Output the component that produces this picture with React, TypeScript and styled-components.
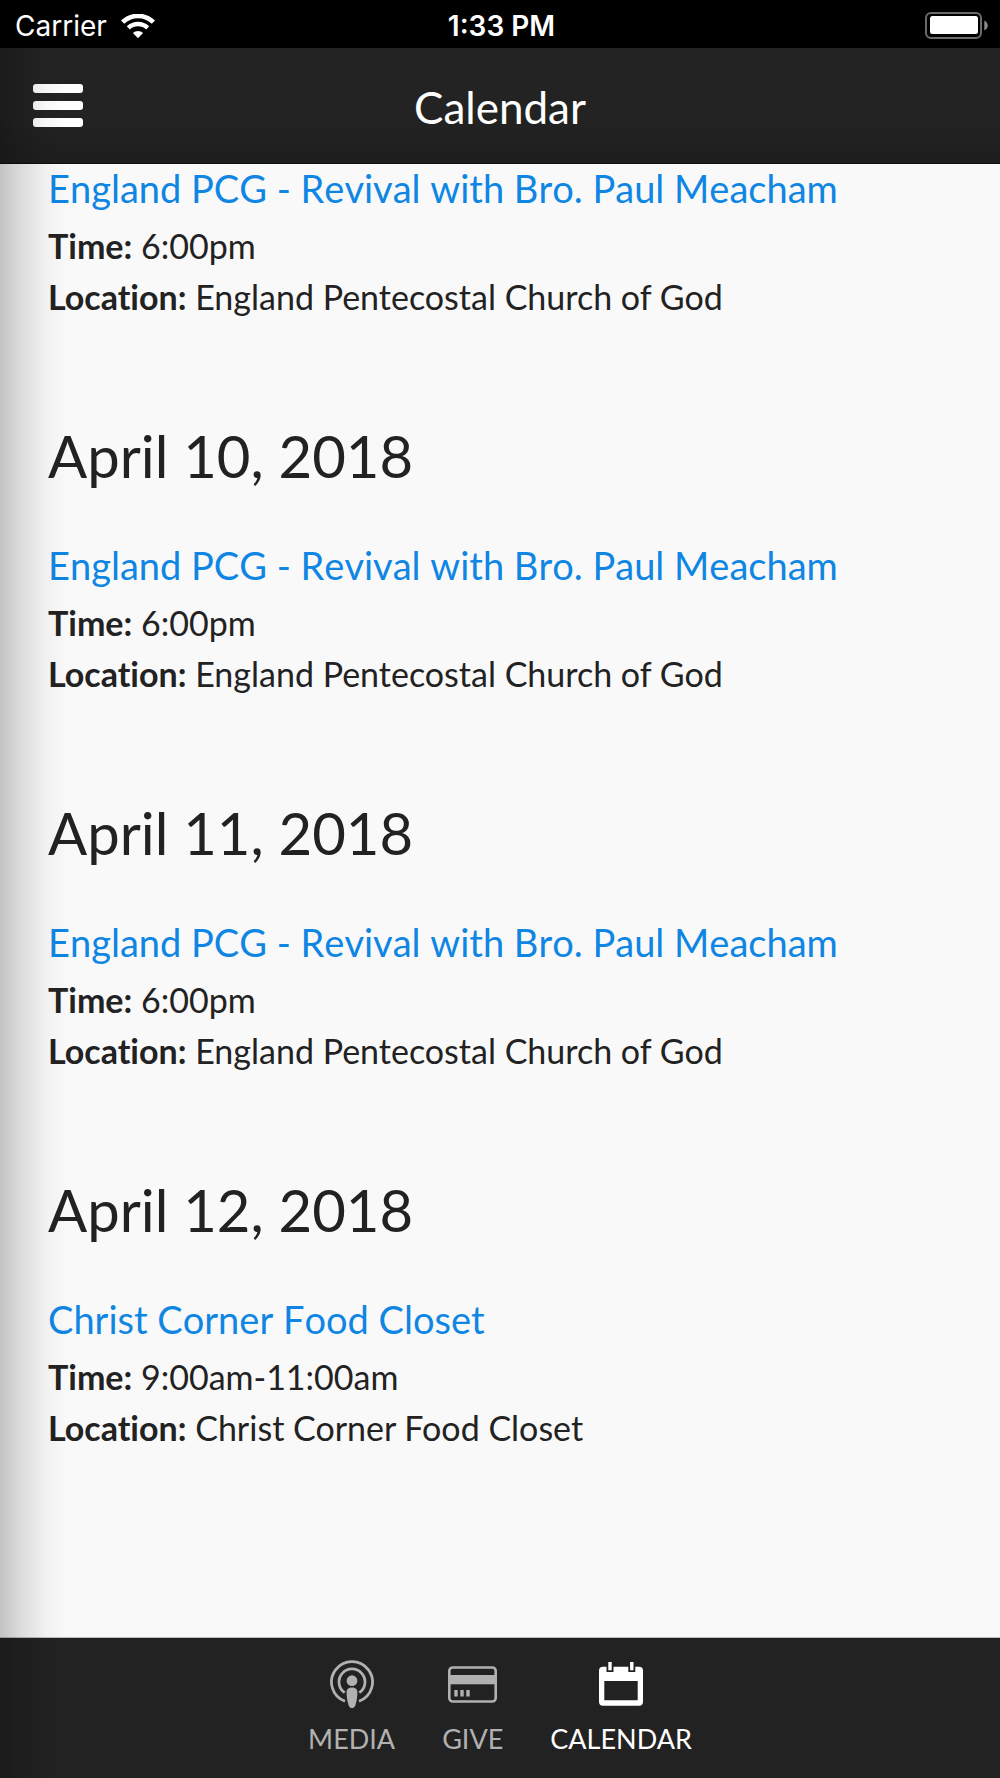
import React from "react";
import styled, { createGlobalStyle } from "styled-components";

const GlobalStyle = createGlobalStyle`
  *, *::before, *::after { box-sizing: border-box; }
  body {
    margin: 0;
    background: #f9f9f9;
    color: #222;
    font-family: Lato, "Open Sans", sans-serif;
    font-variant-ligatures: none;
  }
`;

const Screen = styled.div`
  min-height: 100vh;
  display: flex;
  flex-direction: column;
`;

const StatusBar = styled.div`
  height: 48px;
  padding: 3px 12px 0 15px;
  display: grid;
  grid-template-columns: 1fr auto 1fr;
  align-items: center;
  background: #000;
  color: #fff;
  font: 400 28px/44px Inter, sans-serif;
`;

const Carrier = styled.div`
  display: flex;
  align-items: center;
  gap: 14px;
`;

const Clock = styled.time`
  font-weight: 600;
`;

const Battery = styled.svg`
  justify-self: end;
`;

const Page = styled.div`
  position: relative;
  flex: 1;
  display: flex;
  flex-direction: column;

  &::before {
    content: "";
    position: absolute;
    z-index: 1;
    top: 0;
    bottom: 0;
    left: 0;
    width: 68px;
    pointer-events: none;
    background: linear-gradient(
      to right,
      rgba(0, 0, 0, 0.22),
      rgba(0, 0, 0, 0.12) 30%,
      rgba(0, 0, 0, 0.03) 68%,
      rgba(0, 0, 0, 0)
    );
  }
`;

const Header = styled.header`
  height: 116px;
  padding: 0 33px;
  display: grid;
  grid-template-columns: 1fr auto 1fr;
  align-items: center;
  background: linear-gradient(#232323 60%, #1e1e1e);
  border-bottom: 1px solid #0c0c0c;
  color: #fff;
`;

const MenuButton = styled.button`
  justify-self: start;
  padding: 0;
  border: 0;
  background: none;
  display: grid;
  gap: 8px;
`;

const MenuBar = styled.span`
  width: 50px;
  height: 9px;
  border-radius: 3px;
  background: #fff;
`;

const Title = styled.h1`
  margin: 0;
  padding-top: 2px;
  font-size: 44px;
  line-height: 56px;
  font-weight: 400;
`;

const Events = styled.main`
  flex: 1;
  padding: 0 48px 98px;
`;

const Day = styled.section`
  & + & {
    padding-top: 98px;
  }
`;

const DayHeading = styled.h2`
  margin: 0 0 49px;
  font-size: 58px;
  line-height: 72px;
  font-weight: 400;
`;

const EventTitle = styled.h3`
  margin: 0 0 8px;
  font-size: 38px;
  line-height: 48px;
  font-weight: 400;
  font-kerning: none;
`;

const EventLink = styled.a`
  color: #0f86e3;
  text-decoration: none;
`;

const Detail = styled.p`
  margin: 0;
  font-size: 34px;
  line-height: 51px;
`;

const TabBar = styled.nav`
  height: 140px;
  padding-top: 22px;
  display: flex;
  justify-content: center;
  gap: 47px;
  background: #222;
  box-shadow: 0 -1px 0 #bdbdbd;
`;

const Tab = styled.a<{ $active?: boolean }>`
  display: flex;
  flex-direction: column;
  align-items: center;
  gap: 15px;
  color: ${(p) => (p.$active ? "#fff" : "#b1b1b1")};
  font-size: 27px;
  line-height: 32px;
  text-decoration: none;
`;

const days = [
  { date: "", title: "England PCG - Revival with Bro. Paul Meacham", time: "6:00pm", place: "England Pentecostal Church of God" },
  { date: "April 10, 2018", title: "England PCG - Revival with Bro. Paul Meacham", time: "6:00pm", place: "England Pentecostal Church of God" },
  { date: "April 11, 2018", title: "England PCG - Revival with Bro. Paul Meacham", time: "6:00pm", place: "England Pentecostal Church of God" },
  { date: "April 12, 2018", title: "Christ Corner Food Closet", time: "9:00am-11:00am", place: "Christ Corner Food Closet" },
];

const WifiIcon = () => (
  <svg width="34" height="24" viewBox="0 0 34 24" fill="none" stroke="#fff" aria-hidden="true">
    <path d="M1.6 8.2a22 22 0 0 1 30.8 0" strokeWidth="4.6" />
    <path d="M7.3 13.9a14 14 0 0 1 19.4 0" strokeWidth="4.4" />
    <path d="M11.9 19.1a7.3 7.3 0 0 1 10.2 0L17 24.2z" fill="#fff" stroke="none" />
  </svg>
);

const BatteryIcon = () => (
  <Battery width="63" height="27" viewBox="0 0 63 27" aria-hidden="true">
    <rect x="1" y="1" width="55" height="25" rx="5" fill="none" stroke="#6b6b6b" strokeWidth="2" />
    <rect x="5" y="4" width="48" height="18" rx="2.5" fill="#fff" />
    <path d="M59.3 8.5c4.6 2 4.6 8 0 10z" fill="#8c8c8c" />
  </Battery>
);

const PodcastIcon = () => (
  <svg width="44" height="48" viewBox="0 0 44 48" fill="none" stroke="currentColor" aria-hidden="true">
    <path d="M15 41.3a20.5 20.5 0 1 1 14 0" strokeWidth="2.8" />
    <path d="M14.7 32.7a13 13 0 1 1 14.6 0" strokeWidth="2.8" />
    <circle cx="22" cy="20.7" r="5.4" fill="currentColor" stroke="none" />
    <path
      d="M16.6 32.5c0-3.4 2-4.9 5.4-4.9s5.4 1.5 5.4 4.9c0 4.5-.8 9-1.8 12.3-.6 2-1.9 3.4-3.6 3.4s-3-1.4-3.6-3.4c-1-3.3-1.8-7.8-1.8-12.3z"
      fill="currentColor"
      stroke="none"
    />
  </svg>
);

const CardIcon = () => (
  <svg width="49" height="48" viewBox="0 0 49 48" fill="currentColor" aria-hidden="true">
    <rect x="1.3" y="7.5" width="46.4" height="34" rx="3.5" fill="none" stroke="currentColor" strokeWidth="2.6" />
    <rect x="1" y="15" width="47" height="9.3" />
    <path d="M6.3 30h3.4v6.5H6.3zM12.3 30h3.4v6.5h-3.4zM18.3 30h3.4v6.5h-3.4z" />
  </svg>
);

const CalendarIcon = () => (
  <svg width="44" height="48" viewBox="0 0 44 48" fill="currentColor" aria-hidden="true">
    <path
      fillRule="evenodd"
      d="M4 6.7h3.5V12h7V6.7h14.8V12h7V6.7H40a4 4 0 0 1 4 4v31a4 4 0 0 1-4 4H4a4 4 0 0 1-4-4v-31a4 4 0 0 1 4-4zM5.3 21v19.2h33.4V21z"
    />
    <path d="M9.3 2h3.4v8.3H9.3zM31.1 2h3.4v8.3h-3.4z" />
  </svg>
);

export default function App() {
  return (
    <Screen>
      <GlobalStyle />
      <StatusBar>
        <Carrier>
          Carrier
          <WifiIcon />
        </Carrier>
        <Clock>1:33 PM</Clock>
        <BatteryIcon />
      </StatusBar>
      <Page>
        <Header>
          <MenuButton type="button" aria-label="Menu">
            <MenuBar />
            <MenuBar />
            <MenuBar />
          </MenuButton>
          <Title>Calendar</Title>
        </Header>
        <Events>
          {days.map((day, i) => (
            <Day key={i}>
              {day.date && <DayHeading>{day.date}</DayHeading>}
              <EventTitle>
                <EventLink href="#event">{day.title}</EventLink>
              </EventTitle>
              <Detail>
                <strong>Time:</strong> {day.time}
              </Detail>
              <Detail>
                <strong>Location:</strong> {day.place}
              </Detail>
            </Day>
          ))}
        </Events>
        <TabBar>
          <Tab href="#media">
            <PodcastIcon />
            MEDIA
          </Tab>
          <Tab href="#give">
            <CardIcon />
            GIVE
          </Tab>
          <Tab href="#calendar" $active aria-current="page">
            <CalendarIcon />
            CALENDAR
          </Tab>
        </TabBar>
      </Page>
    </Screen>
  );
}
